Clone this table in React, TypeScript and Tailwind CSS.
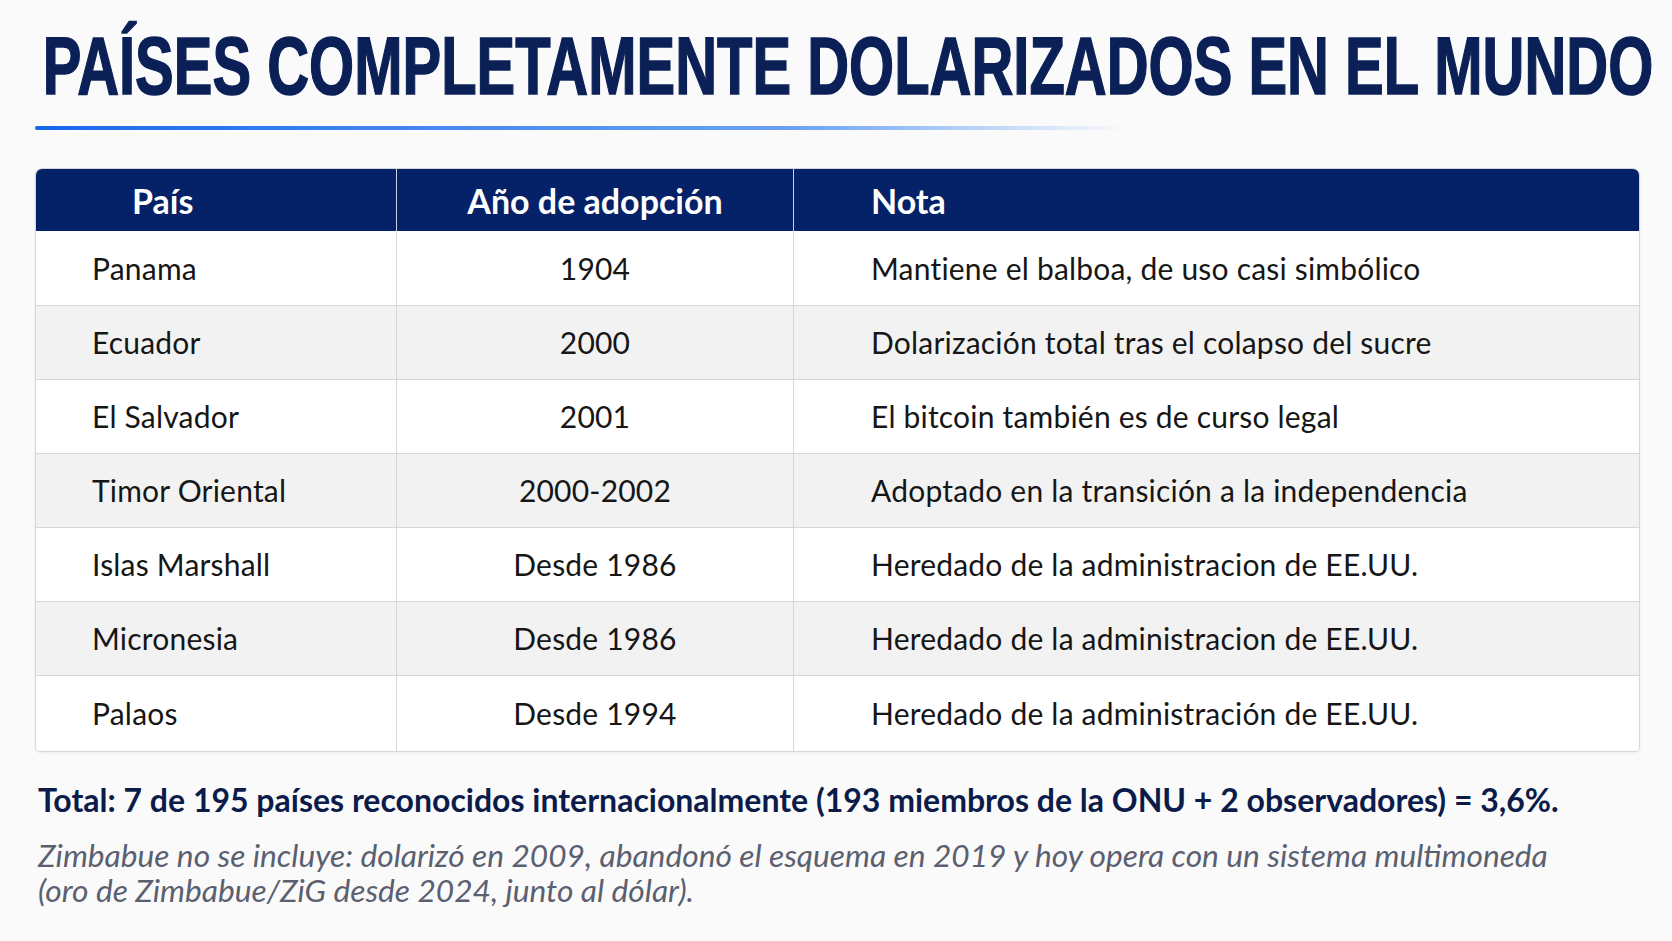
import React from "react";

const rows = [
  ["Panama", "1904", "Mantiene el balboa, de uso casi simbólico"],
  ["Ecuador", "2000", "Dolarización total tras el colapso del sucre"],
  ["El Salvador", "2001", "El bitcoin también es de curso legal"],
  ["Timor Oriental", "2000-2002", "Adoptado en la transición a la independencia"],
  ["Islas Marshall", "Desde 1986", "Heredado de la administracion de EE.UU."],
  ["Micronesia", "Desde 1986", "Heredado de la administracion de EE.UU."],
  ["Palaos", "Desde 1994", "Heredado de la administración de EE.UU."],
];

export default function App() {
  return (
    <div
      className="w-[1672px] h-[941px] bg-[#fafafa] overflow-hidden pl-[35px] pt-[25px]"
      style={{ fontFamily: "Lato, 'Noto Sans', sans-serif" }}
    >
      <h1
        className="origin-left scale-x-[0.707] text-[#0a2056] text-[82px] leading-[82px] font-bold pl-[11px] whitespace-nowrap [-webkit-text-stroke:1.5px_#0a2056]"
        style={{ fontFamily: "'Liberation Sans', Arial, sans-serif" }}
      >
        PAÍSES COMPLETAMENTE DOLARIZADOS EN EL MUNDO
      </h1>
      <div className="mt-[19px] h-[4px] w-[1090px] rounded-full bg-gradient-to-r from-[#1767ea] via-[#6aa3f5] via-70% to-transparent" />
      <div className="mt-[38px] w-[1605px] rounded-t-[7px] rounded-b-[5px] border border-[#d6d6d6] overflow-hidden bg-white shadow-[0_1px_3px_rgba(0,0,0,0.06)]">
        <div className="grid grid-cols-[361px_397px_1fr] h-[62px] bg-[#052268] text-white text-[34px] font-bold">
          <div className="flex items-center pl-[96px] border-r border-[#c9cfdc]">País</div>
          <div className="flex items-center justify-center border-r border-[#c9cfdc]">Año de adopción</div>
          <div className="flex items-center pl-[77px]">Nota</div>
        </div>
        {rows.map((r, i) => (
          <div
            key={i}
            className={`grid grid-cols-[361px_397px_1fr] ${i === rows.length - 1 ? "h-[76px]" : "h-[74px]"} text-[30px] tracking-[0.2px] text-[#161616] ${i % 2 === 1 ? "bg-[#f2f2f2]" : "bg-white"} ${i > 0 ? "border-t border-[#d6d6d6]" : ""}`}
          >
            <div className="flex items-center pl-[56px] border-r border-[#d6d6d6]">{r[0]}</div>
            <div className="flex items-center justify-center border-r border-[#d6d6d6]">{r[1]}</div>
            <div className="flex items-center pl-[77px]">{r[2]}</div>
          </div>
        ))}
      </div>
      <p className="mt-[29px] pl-[3px] text-[32px] leading-[38px] font-bold text-[#0c1c4a] whitespace-nowrap">
        Total: 7 de 195 países reconocidos internacionalmente (193 miembros de la ONU + 2 observadores) = 3,6%.
      </p>
      <p className="mt-[19px] pl-[3px] text-[31.7px] italic text-[#5a6070] leading-[35px] w-[1560px]">
        Zimbabue no se incluye: dolarizó en 2009, abandonó el esquema en 2019 y hoy opera con un sistema multimoneda
        <br />
        (oro de Zimbabue/ZiG desde 2024, junto al dólar).
      </p>
    </div>
  );
}
